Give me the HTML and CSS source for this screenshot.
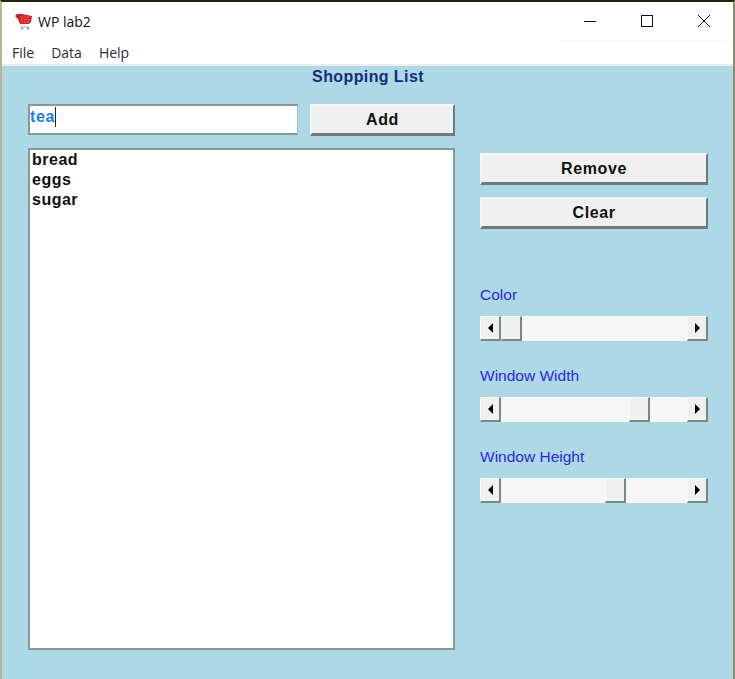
FILE: index.html
```html
<!DOCTYPE html>
<html lang="en">
<head>
    <meta charset="UTF-8">
    <title>WP lab2</title>
    <link rel="stylesheet" href="styles.css">
</head>
<body>
<div class="window">
    <div class="titlebar">
        <svg class="app-icon" width="20" height="20" viewBox="0 0 20 20">
            <path d="M1 5 L3 3 L8 3 L18 5 L17 11 L15 13 L6 13 L4 8 Z" fill="#d3131d"/>
            <path d="M5 6 H17 M5.500 8.500 H17 M6 11 H16 M8 3.500 V13 M11 4 V13 M14 4.500 V13" stroke="#ee6a6a" stroke-width="0.6"/>
            <path d="M6 14 L8 16 H15" stroke="#b0b0b0" stroke-width="1" fill="none"/>
            <circle cx="8" cy="17.500" r="1.200" fill="#999"/>
            <circle cx="14" cy="17.500" r="1.200" fill="#999"/>
        </svg>
        <span class="app-title">WP lab2</span>
        <div class="controls">
            <svg width="12" height="12" viewBox="0 0 12 12"><path d="M0 6.500 H12" stroke="#111" stroke-width="1"/></svg>
            <svg width="12" height="12" viewBox="0 0 12 12"><rect x="0.500" y="0.500" width="11" height="11" fill="none" stroke="#111"/></svg>
            <svg width="12" height="12" viewBox="0 0 12 12"><path d="M0 0 L12 12 M12 0 L0 12" stroke="#111" stroke-width="1"/></svg>
        </div>
    </div>
    <div class="menubar">
        <span>File</span>
        <span>Data</span>
        <span>Help</span>
    </div>
    <div class="client">
        <h1 class="heading">Shopping List</h1>
        <div class="panels">
            <div class="left">
                <div class="add-row">
                    <div class="edit"><span class="edit-text">tea</span><span class="caret"></span></div>
                    <button class="btn add-btn">Add</button>
                </div>
                <ul class="list">
                    <li>bread</li>
                    <li>eggs</li>
                    <li>sugar</li>
                </ul>
            </div>
            <div class="right">
                <button class="btn">Remove</button>
                <button class="btn">Clear</button>
                <div class="sliders">
                    <div class="slider">
                        <label>Color</label>
                        <div class="scroll">
                            <span class="arrow"><i class="tri-left"></i></span>
                            <div class="track color-track"><span class="thumb"></span></div>
                            <span class="arrow"><i class="tri-right"></i></span>
                        </div>
                    </div>
                    <div class="slider">
                        <label>Window Width</label>
                        <div class="scroll">
                            <span class="arrow"><i class="tri-left"></i></span>
                            <div class="track width-track"><span class="thumb"></span></div>
                            <span class="arrow"><i class="tri-right"></i></span>
                        </div>
                    </div>
                    <div class="slider">
                        <label>Window Height</label>
                        <div class="scroll">
                            <span class="arrow"><i class="tri-left"></i></span>
                            <div class="track height-track"><span class="thumb"></span></div>
                            <span class="arrow"><i class="tri-right"></i></span>
                        </div>
                    </div>
                </div>
            </div>
        </div>
    </div>
</div>
</body>
</html>
```

FILE: styles.css
```css
* {
    padding: 0;
    margin: 0;
    list-style: none;
    box-sizing: border-box;
}

html, body {
    width: 735px;
    height: 679px;
    overflow: hidden;
}

.window {
    width: 735px;
    height: 679px;
    display: flex;
    flex-direction: column;
    background: #fff;
    border-top: 2px solid #23210f;
    border-left: 2px solid #b9b48c;
    border-right: 2px solid #8f8b6c;
}

.titlebar {
    height: 39px;
    display: flex;
    align-items: center;
    padding-left: 12px;
    flex: none;
    background: linear-gradient(#f7f7f7, #f7f7f7) right bottom / 175px 1px no-repeat;
}

.app-icon {
    margin-top: -2px;
}

.app-title {
    margin-left: 4px;
    margin-top: -1px;
    font: 14px "Open Sans", sans-serif;
    color: #111;
}

.controls {
    margin-left: auto;
    display: flex;
    gap: 45px;
    padding-right: 23px;
    margin-top: -2px;
}

.menubar {
    height: 25px;
    display: flex;
    gap: 17px;
    padding: 0 0 1px 10px;
    align-items: center;
    font: 14px "Open Sans", sans-serif;
    color: #2a2a3a;
    border-bottom: 2px solid #eeeeee;
    flex: none;
}

.client {
    flex: 1;
    background: #add8e6;
    padding: 1px 25px 0 26px;
}

.heading {
    height: 19px;
    font: bold 16px/19px "Liberation Sans", sans-serif;
    letter-spacing: 0.4px;
    color: #1b2a7a;
    text-align: center;
    width: 680px;
}

.panels {
    display: flex;
    gap: 25px;
    margin-top: 18px;
}

.left {
    width: 427px;
}

.add-row {
    display: flex;
    gap: 12px;
}

.edit {
    width: 270px;
    height: 31px;
    background: #fff;
    border: 2px solid #8b9699;
    border-right: 1px solid #a9bcc3;
    display: flex;
    align-items: center;
    padding-bottom: 5px;
}

.edit-text {
    font: bold 16px "Liberation Sans", sans-serif;
    letter-spacing: 0.6px;
    color: #1a7cf0;
}

.caret {
    width: 1px;
    height: 20px;
    background: #222;
}

.btn {
    display: block;
    background: #f0f0f0;
    border: 2px solid #f2f7f8;
    border-right-color: #6e7a7d;
    border-bottom: 3px solid #6e7a7d;
    font: bold 16px "Liberation Sans", sans-serif;
    letter-spacing: 0.6px;
    color: #111;
    height: 32px;
    width: 228px;
}

.add-btn {
    width: 145px;
}

.list {
    margin-top: 12px;
    width: 427px;
    height: 502px;
    background: #fff;
    border: 2px solid #8b9699;
    padding: 0 2px;
    font: bold 16px/20px "Liberation Sans", sans-serif;
    letter-spacing: 0.5px;
    color: #111;
}

.right {
    width: 228px;
    padding-top: 49px;
    display: flex;
    flex-direction: column;
    gap: 12px;
}

.sliders {
    margin-top: 43px;
    display: flex;
    flex-direction: column;
    gap: 24px;
}

.slider label {
    display: block;
    height: 32px;
    font: 15.5px/21px "Liberation Sans", sans-serif;
    color: #2a2ae0;
}

.scroll {
    height: 25px;
    display: flex;
}

.arrow {
    width: 21px;
    flex: none;
    display: flex;
    align-items: center;
    justify-content: center;
    background: #f0f0f0;
    border: 1px solid #f8fbfb;
    border-right: 2px solid #7b8689;
    border-bottom: 2px solid #7b8689;
}

.tri-left {
    border: 5px solid transparent;
    border-left: 0;
    border-right: 5px solid #000;
}

.tri-right {
    border: 5px solid transparent;
    border-right: 0;
    border-left: 5px solid #000;
}

.track {
    flex: 1;
    display: flex;
    background: repeating-conic-gradient(#f0f0f0 0 25%, #fcfcfc 0 50%) 0 0 / 2px 2px;
}

.thumb {
    width: 21px;
    height: 25px;
    background: #f0f0f0;
    border: 1px solid #f8fbfb;
    border-right: 2px solid #7b8689;
    border-bottom: 2px solid #7b8689;
}

.width-track { padding-left: 128px; }
.height-track { padding-left: 104px; }
```
